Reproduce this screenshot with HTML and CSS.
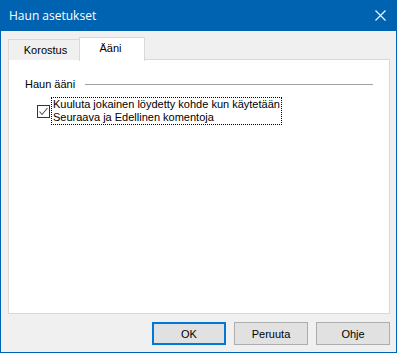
FILE: index.html
```html
<!DOCTYPE html>
<html>
<head>
<meta charset="utf-8">
<link rel="stylesheet" href="styles.css">
</head>
<body>
<div class="window">
  <div class="titlebar">
    <span class="title">Haun asetukset</span>
    <svg class="close" width="11" height="11" viewBox="0 0 11 11"><path d="M0.5 0.5 L10.5 10.5 M10.5 0.5 L0.5 10.5" stroke="#fff" stroke-width="1.1" fill="none"/></svg>
  </div>
  <div class="content">
    <div class="tabs">
      <div class="tab">Korostus</div>
      <div class="tab selected">Ääni</div>
    </div>
    <div class="panel">
      <div class="group">
        <span class="group-label">Haun ääni</span>
        <span class="group-line"></span>
      </div>
      <div class="option">
        <span class="checkbox">
          <svg width="11" height="11" viewBox="0 0 11 11"><path d="M1.5 5.5 L4 8.5 L9.5 2" stroke="#555" stroke-width="1.1" fill="none"/></svg>
        </span>
        <span class="option-label">Kuuluta jokainen löydetty kohde kun käytetään<br>Seuraava ja Edellinen komentoja</span>
      </div>
    </div>
    <div class="buttons">
      <button class="btn default">OK</button>
      <button class="btn">Peruuta</button>
      <button class="btn">Ohje</button>
    </div>
  </div>
</div>
</body>
</html>
```
FILE: styles.css
```css
html, body {
  margin: 0;
  padding: 0;
  background: #fff;
}
.window {
  width: 397px;
  height: 353px;
  box-sizing: border-box;
  border: 1px solid #0063b1;
  border-top: none;
  background: #f0f0f0;
  display: flex;
  flex-direction: column;
  font-family: "Liberation Sans", Arial, sans-serif;
  font-size: 11px;
  color: #000;
}
.titlebar {
  height: 31px;
  background: #0063b1;
  display: flex;
  align-items: center;
  justify-content: space-between;
  padding: 0 10px 0 8px;
  flex-shrink: 0;
}
.title {
  color: #fff;
  font-family: "Open Sans", "Liberation Sans", sans-serif;
  font-size: 12px;
  padding-bottom: 1px;
}
.close {
  display: block;
  margin-bottom: 1px;
}
.content {
  flex: 1;
  display: flex;
  flex-direction: column;
  padding: 6px 6px 7px 7px;
}
.tabs {
  display: flex;
  align-items: flex-end;
  height: 23px;
  position: relative;
  z-index: 1;
  margin-bottom: -1px;
}
.tab {
  box-sizing: border-box;
  height: 21px;
  border: 1px solid #d9d9d9;
  border-bottom: none;
  background: #f0f0f0;
  padding: 0 0 0 3px;
  width: 72px;
  text-align: center;
  line-height: 21px;
}
.tab + .tab {
  margin-left: -1px;
}
.tab.selected {
  background: #fff;
  height: 24px;
  width: 66px;
  padding: 0 3px 0 0;
  line-height: 21px;
  margin-bottom: -1px;
}
.panel {
  height: 255px;
  box-sizing: border-box;
  border: 1px solid #d9d9d9;
  background: #fff;
  padding: 17px 16px 0 16px;
}
.group {
  display: flex;
  align-items: center;
  height: 14px;
}
.group-label {
  white-space: nowrap;
}
.group-line {
  flex: 1;
  height: 1px;
  background: #a0a0a0;
  margin-left: 10px;
}
.option {
  display: flex;
  align-items: center;
  margin-top: 6px;
  margin-left: 12px;
}
.checkbox {
  box-sizing: border-box;
  width: 13px;
  height: 13px;
  border: 1px solid #333;
  display: flex;
  align-items: center;
  justify-content: center;
  background: #fff;
  flex-shrink: 0;
}
.checkbox svg {
  display: block;
}
.option-label {
  margin-left: 1px;
  border: 1px dotted #000;
  padding: 0 1px 0 1px;
  line-height: 13px;
}
.buttons {
  margin-top: auto;
  display: flex;
  justify-content: flex-end;
  gap: 8px;
}
.btn {
  box-sizing: border-box;
  width: 74px;
  height: 23px;
  background: #e1e1e1;
  border: 1px solid #adadad;
  font-family: "Liberation Sans", Arial, sans-serif;
  font-size: 11px;
  color: #000;
  padding: 0;
  margin: 0;
}
.btn.default {
  border-color: #0078d7;
  box-shadow: inset 0 0 0 1px #0078d7;
}
```
